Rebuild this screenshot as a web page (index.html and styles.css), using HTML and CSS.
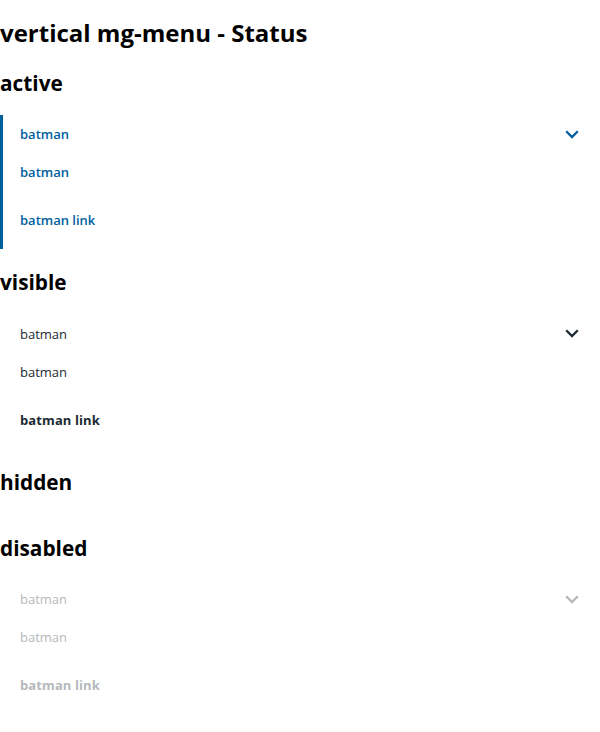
FILE: index.html
```html
<!DOCTYPE html>
<html>
<head>
<meta charset="utf-8">
<link rel="stylesheet" href="styles.css">
</head>
<body>
<h1 class="title">vertical mg-menu - Status</h1>

<section class="section">
  <h2 class="section-title">active</h2>
  <nav class="menu menu--active">
    <div class="menu-item"><span class="label label--semi">batman</span>
      <svg class="chevron" width="14" height="9" viewBox="0 0 14 9"><polyline points="1.2,1.2 7,7 12.8,1.2" fill="none" stroke="currentColor" stroke-width="2.3"/></svg>
    </div>
    <div class="menu-item"><span class="label label--semi">batman</span></div>
    <div class="menu-item menu-item--link"><span class="label label--semi">batman link</span></div>
  </nav>
</section>

<section class="section">
  <h2 class="section-title">visible</h2>
  <nav class="menu menu--visible">
    <div class="menu-item"><span class="label">batman</span>
      <svg class="chevron" width="14" height="9" viewBox="0 0 14 9"><polyline points="1.2,1.2 7,7 12.8,1.2" fill="none" stroke="currentColor" stroke-width="2.3"/></svg>
    </div>
    <div class="menu-item"><span class="label">batman</span></div>
    <div class="menu-item menu-item--link"><span class="label label--bold">batman link</span></div>
  </nav>
</section>

<section class="section">
  <h2 class="section-title">hidden</h2>
  <nav class="menu menu--hidden"></nav>
</section>

<section class="section">
  <h2 class="section-title">disabled</h2>
  <nav class="menu menu--disabled">
    <div class="menu-item"><span class="label">batman</span>
      <svg class="chevron" width="14" height="9" viewBox="0 0 14 9"><polyline points="1.2,1.2 7,7 12.8,1.2" fill="none" stroke="currentColor" stroke-width="2.3"/></svg>
    </div>
    <div class="menu-item"><span class="label">batman</span></div>
    <div class="menu-item menu-item--link"><span class="label label--bold">batman link</span></div>
  </nav>
</section>
</body>
</html>
```

FILE: styles.css
```css
html, body {
  margin: 0;
  padding: 0;
  background: #fff;
}
body {
  font-family: "Open Sans", "DejaVu Sans", sans-serif;
  color: #000;
}
.title {
  font-size: 24px;
  font-weight: 700;
  line-height: 33px;
  margin: 16px 0 0;
}
.section {
  display: flex;
  flex-direction: column;
}
.section-title {
  font-size: 20.8px;
  font-weight: 700;
  line-height: 27px;
  margin: 20.5px 0 18.5px;
}
.menu {
  display: flex;
  flex-direction: column;
  border-left: 3px solid transparent;
}
.menu--hidden {
  border: 0;
}
.menu--active {
  border-left-color: #005f9f;
  color: #005f9f;
}
.menu--visible {
  color: #1b2a33;
}
.menu--disabled {
  color: #b5b9bb;
}
.menu-item {
  height: 38px;
  display: flex;
  align-items: center;
  justify-content: space-between;
  padding: 0 21px 0 17px;
  font-size: 13px;
}
.menu-item--link {
  margin: 10px 0 9.5px;
}
.label {
  font-weight: 400;
}
.label--semi {
  font-weight: 600;
}
.label--bold {
  font-weight: 700;
  letter-spacing: 0.1px;
}
.chevron {
  display: block;
}
```
